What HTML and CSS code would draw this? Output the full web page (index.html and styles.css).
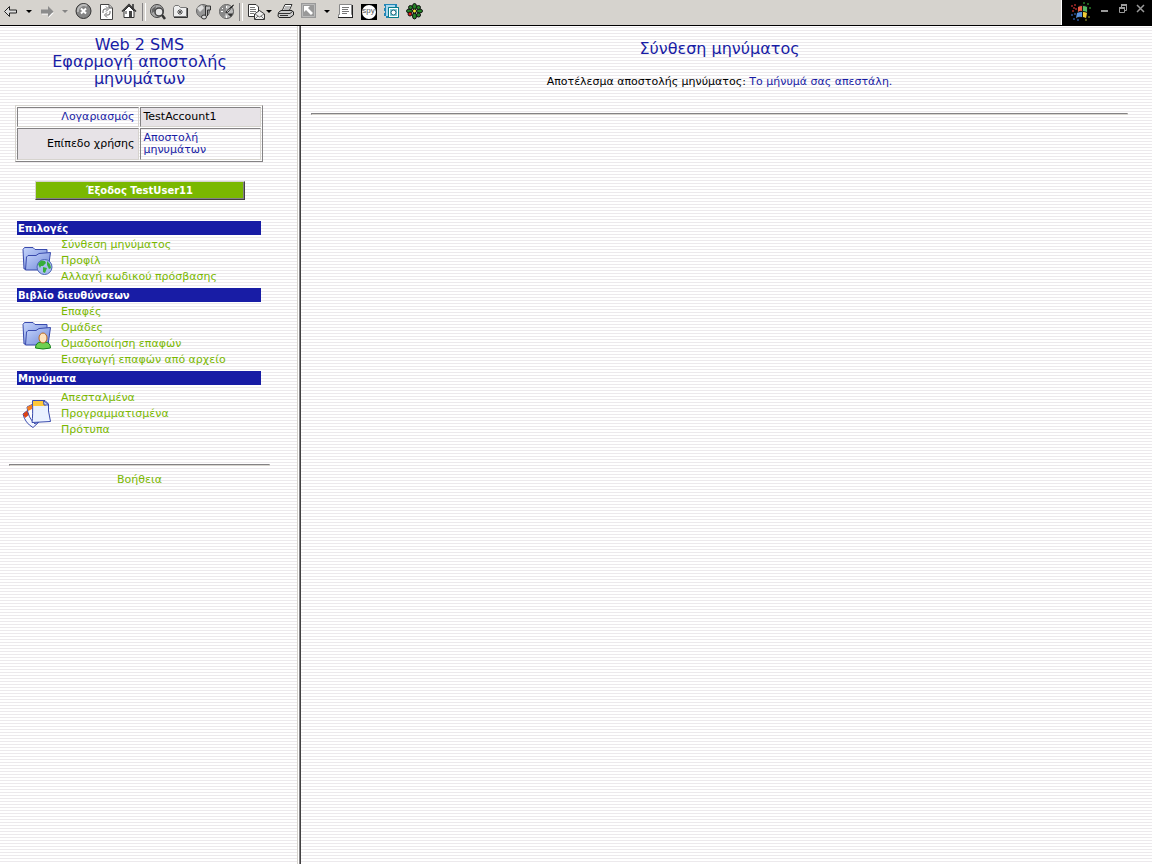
FILE: index.html
```html
<!DOCTYPE html>
<html lang="el">
<head>
<meta charset="utf-8">
<title>Web 2 SMS</title>
<link rel="stylesheet" href="styles.css">
</head>
<body>
<header class="toolbar">
  <button class="tool nav" aria-label="Back"><svg width="16" height="16" viewBox="0 0 16 16"><path d="M1.500 7.500L6.500 2.500V6H13.500V9H6.500V12.500Z" fill="#ddd" stroke="#222"/></svg></button>
  <button class="tool drop" aria-label="Back history"><svg width="6" height="4"><path d="M0 0H6L3 3Z"/></svg></button>
  <button class="tool nav" aria-label="Forward"><svg width="16" height="16" viewBox="0 0 16 16"><path d="M15 8.500L9.500 14V10.500H3V9.500H9Z" fill="#fff"/><path d="M14.500 7.500L9 2V5.500H2V9.500H9V13Z" fill="#8c8c8c"/></svg></button>
  <button class="tool drop" aria-label="Forward history"><svg width="6" height="4"><path d="M0 0H6L3 3Z" fill="#848484"/></svg></button>
  <button class="tool" aria-label="Stop"><svg width="17" height="17" viewBox="0 0 17 17"><circle cx="8.500" cy="8" r="7.500" fill="#858585" stroke="#333"/><path d="M3 9A6 6 0 0 1 12 3" fill="none" stroke="#bbb" stroke-width="2"/><path d="M6 5.500L11 10.500M11 5.500L6 10.500" stroke="#fff" stroke-width="2"/></svg></button>
  <button class="tool" aria-label="Refresh"><svg width="16" height="18" viewBox="0 0 16 18"><path d="M1.500 1.500H10L13.500 5V16.500H1.500Z" fill="#fff" stroke="#444"/><path d="M10 1.500V5H13" fill="#ccc" stroke="#555"/><path d="M4 10V8Q4 6 6 6H8M11 8V10Q11 12 9 12H7M7 3.500L9.500 6L7 8.500M8 9.500L5.500 12L8 14.500" fill="none" stroke="#666"/></svg></button>
  <button class="tool" aria-label="Home"><svg width="18" height="17" viewBox="0 0 18 17"><path d="M3 8V14.500H13V8L8 3Z" fill="#fff" stroke="#333"/><path d="M11 1H13V6H11Z" fill="#555"/><path d="M1 8.500L8 1.500L15 8.500" fill="none" stroke="#333" stroke-width="1.500"/><path d="M4 8H6V11H4Z" fill="#999"/><path d="M8 8H11V14H8Z" fill="#444"/></svg></button>
  <span class="sep"></span>
  <button class="tool" aria-label="Search"><svg width="18" height="18" viewBox="0 0 18 18"><circle cx="8" cy="8" r="6.500" fill="#aaa" stroke="#444"/><path d="M3 6L7 3L6 8L3 10Z" fill="#666"/><circle cx="10" cy="9" r="4" fill="#e7e7e7" stroke="#444" stroke-width="1.500"/><path d="M13 12L16 16" stroke="#333" stroke-width="2.500"/></svg></button>
  <button class="tool" aria-label="Favorites"><svg width="17" height="16" viewBox="0 0 17 16"><path d="M1.500 12.500V3.500L3 1.500H6.500L8.500 3.500H14.500V12.500Z" fill="#eee" stroke="#777"/><path d="M2 13.500H15.500V4" fill="none" stroke="#333"/><path d="M8 5V11M5 8H11M6 6L10 10M10 6L6 10" stroke="#555"/></svg></button>
  <button class="tool" aria-label="Media"><svg width="18" height="18" viewBox="0 0 18 18"><circle cx="8" cy="8" r="6.500" fill="#969696" stroke="#666"/><path d="M2 5L7 2L9 5L5 9Z" fill="#ddd"/><path d="M10.500 13.500V3H15.500V7H12.500V13" fill="#bbb" stroke="#333"/><ellipse cx="9" cy="14" rx="2.500" ry="2" fill="#ddd" stroke="#333"/></svg></button>
  <button class="tool" aria-label="History"><svg width="18" height="18" viewBox="0 0 18 18"><circle cx="8.500" cy="8.500" r="7" fill="#bcbcbc" stroke="#555"/><path d="M8.500 1.500A7 7 0 0 0 6 15L8 9.500Z" fill="#888"/><path d="M15.500 2L9 7.500L8 10L10 9Z" fill="#fff" stroke="#222"/><path d="M9 10.500H15L13 14Z" fill="#333"/><path d="M3 8.500H5M8.500 12.500V15M8.500 3V5M4 5L5 6" stroke="#fff"/></svg></button>
  <span class="sep wide"></span>
  <button class="tool mail" aria-label="Mail"><svg width="18" height="18" viewBox="0 0 18 18"><path d="M1.500 1.500H9L11.500 4V13.500H1.500Z" fill="#fff" stroke="#333"/><path d="M3 4.500H8M3 6.500H9M3 8.500H9M3 10.500H7" stroke="#777"/><path d="M7.500 11L12.500 7.500L17.500 11V16.500H7.500Z" fill="#eee" stroke="#333"/><path d="M8 11L12.500 14L17 11M8 16L11 13M17 16L14 13" fill="none" stroke="#777"/></svg><svg width="6" height="4"><path d="M0 0H6L3 3Z"/></svg></button>
  <button class="tool" aria-label="Print"><svg width="18" height="17" viewBox="0 0 18 17"><path d="M5 8L8 1.500H15L12 8Z" fill="#fff" stroke="#333"/><path d="M8 4H13M7 6H12" stroke="#777"/><path d="M1.500 9.500L4 7.500H15L16.500 9V12L13 14.500H2L1 13Z" fill="#ccc" stroke="#222"/><path d="M2 10.500H13L16 8M3 12.500H11" fill="none" stroke="#333"/></svg></button>
  <button class="tool" aria-label="Select"><svg width="17" height="17" viewBox="0 0 17 17"><path d="M1 0H16V15H1Z" fill="#999"/><path d="M2.500 1.500H14.500V13.500H2.500Z" fill="none" stroke="#bbb"/><path d="M4 3H10L8 5L13 10L11 12L6 7L4 9Z" fill="#fff"/></svg></button>
  <button class="tool drop" aria-label="Select options"><svg width="6" height="4"><path d="M0 0H6L3 3Z"/></svg></button>
  <button class="tool" aria-label="Document"><svg width="17" height="17" viewBox="0 0 17 17"><path d="M2.500 1.500H14.500V11.500H15.500V14.500H1.500V11.500H2.500Z" fill="#fff" stroke="#888"/><path d="M1 14.500H16M15.500 2V14" stroke="#222"/><path d="M5 4.500H12M5 6.500H11M5 8.500H12M5 10.500H10" stroke="#777"/></svg></button>
  <button class="tool" aria-label="Spy"><span class="spy"><span class="spy-disc">spy</span></span></button>
  <button class="tool" aria-label="Research"><svg width="17" height="17" viewBox="0 0 17 17"><path d="M1 1H14V4H16V15H3V13H1V10H2V8H1V5H2V3H1Z" fill="#2185b5"/><path d="M3 2H12V4H5V13H3Z" fill="#a9d8ef"/><path d="M5.500 4.500H15.500V14.500H5.500Z" fill="#fff" stroke="#087d8a"/><path d="M7 6H14V13H7Z" fill="#80d0d8"/><circle cx="10.500" cy="9.500" r="2.500" fill="#fff" stroke="#195f77"/></svg></button>
  <button class="tool" aria-label="Messenger"><svg width="17" height="17" viewBox="0 0 17 17"><g fill="#248326" stroke="#111"><ellipse cx="8.500" cy="3.500" rx="2" ry="3"/><ellipse cx="8.500" cy="13" rx="2" ry="3"/><ellipse cx="3.500" cy="8" rx="3" ry="2"/><ellipse cx="13.500" cy="8" rx="3" ry="2"/><circle cx="4.500" cy="4.500" r="2"/><circle cx="12.500" cy="4.500" r="2"/><circle cx="12.500" cy="12" r="2"/><circle cx="4" cy="11" r="2" fill="#e51b13"/></g><circle cx="8.500" cy="8" r="2" fill="#f2e437" stroke="#111"/></svg></button>
  <div class="window">
    <svg width="22" height="20" viewBox="0 0 22 20"><g opacity=".6"><path d="M1 3H3V5H1ZM4 2H6V4H4ZM2 8H4V10H2ZM5 6H7V8H5ZM3 5H5V7H3Z" fill="#c33"/><path d="M1 12H3V14H1ZM4 11H6V13H4ZM3 16H5V18H3ZM7 17H9V19H7Z" fill="#36b"/><path d="M17 1H19V3H17ZM19 5H21V7H19ZM13 0H15V2H13Z" fill="#393"/><path d="M18 14H20V16H18ZM15 17H17V19H15Z" fill="#882"/></g><path d="M8 4Q12 1 18 4L17 17Q12 14 6 17Z" fill="#111"/><path d="M8 5Q10 4 12 4V9Q10 8 8 10Z" fill="#e85b42"/><path d="M13 4Q15 4 17 5V10Q15 9 13 9Z" fill="#55b965"/><path d="M7 11Q9 10 12 10V15Q9 14 6 16Z" fill="#5a93df"/><path d="M13 10Q15 10 17 11L16 16Q14 15 13 15Z" fill="#f1cd35"/></svg>
    <button class="win" aria-label="Minimize"><svg width="10" height="10"><path d="M1 6H8V8H1Z"/></svg></button>
    <button class="win" aria-label="Restore"><svg width="10" height="10"><path d="M3.500 3V1.500H8.500V6.500H7M1.500 4.500H6.500V8.500H1.500Z" fill="none" stroke="#9a9a9a"/><path d="M3 0H9V2H3ZM1 3H7V5H1Z"/></svg></button>
    <button class="win" aria-label="Close"><svg width="10" height="10"><path d="M1 1L8 8M8 1L1 8" stroke="#9a9a9a" stroke-width="1.500"/></svg></button>
  </div>
</header>
<div class="frames">
  <aside class="side">
    <h1 class="title">Web 2 SMS<br>Εφαρμογή αποστολής μηνυμάτων</h1>
    <table class="account">
      <tr><th class="blue" scope="row">Λογαριασμός</th><td class="shade">TestAccount1</td></tr>
      <tr><th class="shade" scope="row">Επίπεδο χρήσης</th><td class="blue">Αποστολή μηνυμάτων</td></tr>
    </table>
    <button class="logout">Έξοδος TestUser11</button>
    <nav class="menu">
      <h2 class="bar">Επιλογές</h2>
      <div class="group">
        <svg class="pic" width="32" height="32" viewBox="0 0 32 32">
          <defs><linearGradient id="fold" x1="0" y1="0" x2="1" y2="1"><stop offset="0" stop-color="#c6d5fb"/><stop offset="1" stop-color="#6f87d8"/></linearGradient></defs>
          <path d="M3 24L2 4.500L3.500 2.500H12L14 4.500H26V8L24 24Z" fill="url(#fold)" stroke="#394aad"/><path d="M4.500 25L5.500 12L7 10.500H15L18 8.500L29.500 7.500L27 25Z" fill="url(#fold)" stroke="#394aad"/>
          <circle cx="23.500" cy="22" r="7.500" fill="#a9bdef" stroke="#4c65b5"/><path d="M17 19L20 15.500L24 16L25 18L22 21H20L19 23ZM22 22L26 23L24 28L22 27ZM26 16L29 19L30 23L28 24L26 20Z" fill="#35ad39"/>
        </svg>
        <ul class="links"><li><a href="#">Σύνθεση μηνύματος</a></li><li><a href="#">Προφίλ</a></li><li><a href="#">Αλλαγή κωδικού πρόσβασης</a></li></ul>
      </div>
      <h2 class="bar">Βιβλίο διευθύνσεων</h2>
      <div class="group">
        <svg class="pic" width="32" height="32" viewBox="0 0 32 32">
          <path d="M3 24L2 4.500L3.500 2.500H12L14 4.500H26V8L24 24Z" fill="url(#fold)" stroke="#394aad"/><path d="M4.500 25L5.500 12L7 10.500H15L18 8.500L29.500 7.500L27 25Z" fill="url(#fold)" stroke="#394aad"/>
          <path d="M14.500 28Q14.500 22.500 20 22H24Q29.500 22.500 29.500 28Q22 30 14.500 28Z" fill="#6ed050" stroke="#16821b"/><ellipse cx="22" cy="18" rx="4" ry="5" fill="#ffe3bd" stroke="#ba681e"/>
        </svg>
        <ul class="links"><li><a href="#">Επαφές</a></li><li><a href="#">Ομάδες</a></li><li><a href="#">Ομαδοποίηση επαφών</a></li><li><a href="#">Εισαγωγή επαφών από αρχείο</a></li></ul>
      </div>
      <h2 class="bar">Μηνύματα</h2>
      <div class="group roomy">
        <svg class="pic" width="32" height="32" viewBox="0 0 32 32">
          <path d="M2 16L7 12L18 24L12 29.500Q4 25 2 16Z" fill="#f5f7ff" stroke="#394aad"/><path d="M2 16L7 12L9 16L4 20Z" fill="#dc4214"/><path d="M6 9L12 6L22 21L14 26Q7 20 6 9Z" fill="#fff" stroke="#394aad"/><path d="M6 9L12 6L13 10L7 13Z" fill="#f57d22"/>
          <path d="M11.500 2.500H24L27.500 6V13L29.500 23.500L11 24.500Q12 18 11.500 2.500Z" fill="#eaf1ff" stroke="#394aad"/><path d="M12 3H24L25 8H12Z" fill="#ffc83b"/><path d="M22.500 2.500L28 7H23Z" fill="#c6d5fb" stroke="#394aad"/>
        </svg>
        <ul class="links"><li><a href="#">Απεσταλμένα</a></li><li><a href="#">Προγραμματισμένα</a></li><li><a href="#">Πρότυπα</a></li></ul>
      </div>
    </nav>
    <hr class="rule">
    <p class="help"><a href="#">Βοήθεια</a></p>
  </aside>
  <main class="main">
    <h2 class="heading">Σύνθεση μηνύματος</h2>
    <p class="result">Αποτέλεσμα αποστολής μηνύματος: <span class="blue">Το μήνυμά σας απεστάλη.</span></p>
    <hr class="rule">
  </main>
</div>
</body>
</html>
```
FILE: styles.css
```css
* { box-sizing: border-box; }
body {
  margin: 0;
  min-height: 100vh;
  display: flex;
  flex-direction: column;
  font: 11px/12px "DejaVu Sans", Verdana, sans-serif;
  color: #000;
}
button { font: inherit; cursor: pointer; }
a { color: #7ab800; text-decoration: none; }
a:hover { text-decoration: underline; }

.toolbar {
  display: flex;
  height: 26px;
  background: #d6d3ce;
  border-bottom: 1px solid #000;
}
.tool {
  display: flex;
  align-items: center;
  justify-content: center;
  width: 23px;
  height: 23px;
  padding: 0;
  border: 0;
  background: none;
}
.tool svg { flex: none; }
.nav { width: 22px; }
.drop { width: 14px; }
.mail { width: 30px; gap: 1px; }
.sep { display: flex; justify-content: center; width: 5px; height: 18px; margin-top: 3px; }
.sep::before { content: ""; width: 2px; border-left: 1px solid #848284; border-right: 1px solid #fff; }
.wide { width: 6px; }
.spy { display: flex; align-items: center; justify-content: center; width: 16px; height: 16px; background: #000; }
.spy-disc { width: 14px; height: 14px; border-radius: 50%; background: #fff; color: #555; font: 8px/12px "Liberation Sans", sans-serif; text-align: center; }
.window {
  display: flex;
  align-items: flex-start;
  gap: 3px;
  width: 91px;
  margin-left: auto;
  padding: 2px 0 0 8px;
  border-left: 1px solid #fff;
  background: #000;
}
.win { display: flex; width: 15px; height: 15px; padding: 2px 0 2px 5px; border: 0; background: none; fill: #9a9a9a; }

.frames {
  flex: 1;
  display: grid;
  grid-template-columns: 301px 1fr;
  background: repeating-linear-gradient(#fff 0 1px, #ece9ec 1px 2px, #fff 2px 3px);
}
.side {
  display: flex;
  flex-direction: column;
  padding: 10px 30px 0 9px;
  border-right: 1px solid #424142;
  box-shadow: inset -1px 0 #848284, inset -2px 0 #fff, inset -3px 0 #d6d3ce;
}
.title, .heading {
  margin: 0;
  font-size: 16px;
  line-height: 17px;
  font-weight: 400;
  color: #181ca5;
  text-align: center;
}
.title { padding: 0 40px; }
.blue { color: #181ca5; }
.account {
  width: 248px;
  margin: 18px 0 0 6px;
  table-layout: fixed;
  border: 1px solid;
  border-color: #d6d3ce #848284 #848284 #d6d3ce;
  border-spacing: 1px;
}
.account th, .account td {
  padding: 3px;
  border: 1px solid;
  border-color: #848284 #d6d3ce #d6d3ce #848284;
  font-weight: 400;
  text-align: left;
}
.account th { text-align: right; }
.account .shade { background: #e7e3e7; }
.logout {
  align-self: center;
  width: 210px;
  height: 19px;
  margin-top: 19px;
  padding: 0;
  border: 1px solid;
  border-color: #d6d3ce #424142 #424142 #d6d3ce;
  box-shadow: inset -1px -1px #848284;
  background: #7ab800;
  color: #fff;
  font-size: 10px;
  font-weight: 700;
}
.menu { margin: 21px 9px 0 8px; }
.bar {
  height: 14px;
  margin: 0;
  padding: 1px;
  background: #181ca5;
  color: #fff;
  font-size: 10px;
  line-height: 13px;
}
.group { display: flex; align-items: center; gap: 8px; padding: 2px 0 3px 4px; }
.roomy { padding-top: 5px; }
.links { margin: 0; padding: 0; list-style: none; line-height: 16px; }
.rule {
  width: 100%;
  margin: 0;
  border: 1px solid;
  border-color: #848284 #d6d3ce #d6d3ce #848284;
}
.side .rule { margin-top: 23px; }
.help { margin: 8px 0; text-align: center; }
.main { padding: 14px 24px 0 10px; }
.result { margin: 19px 0 25px; text-align: center; }
```
